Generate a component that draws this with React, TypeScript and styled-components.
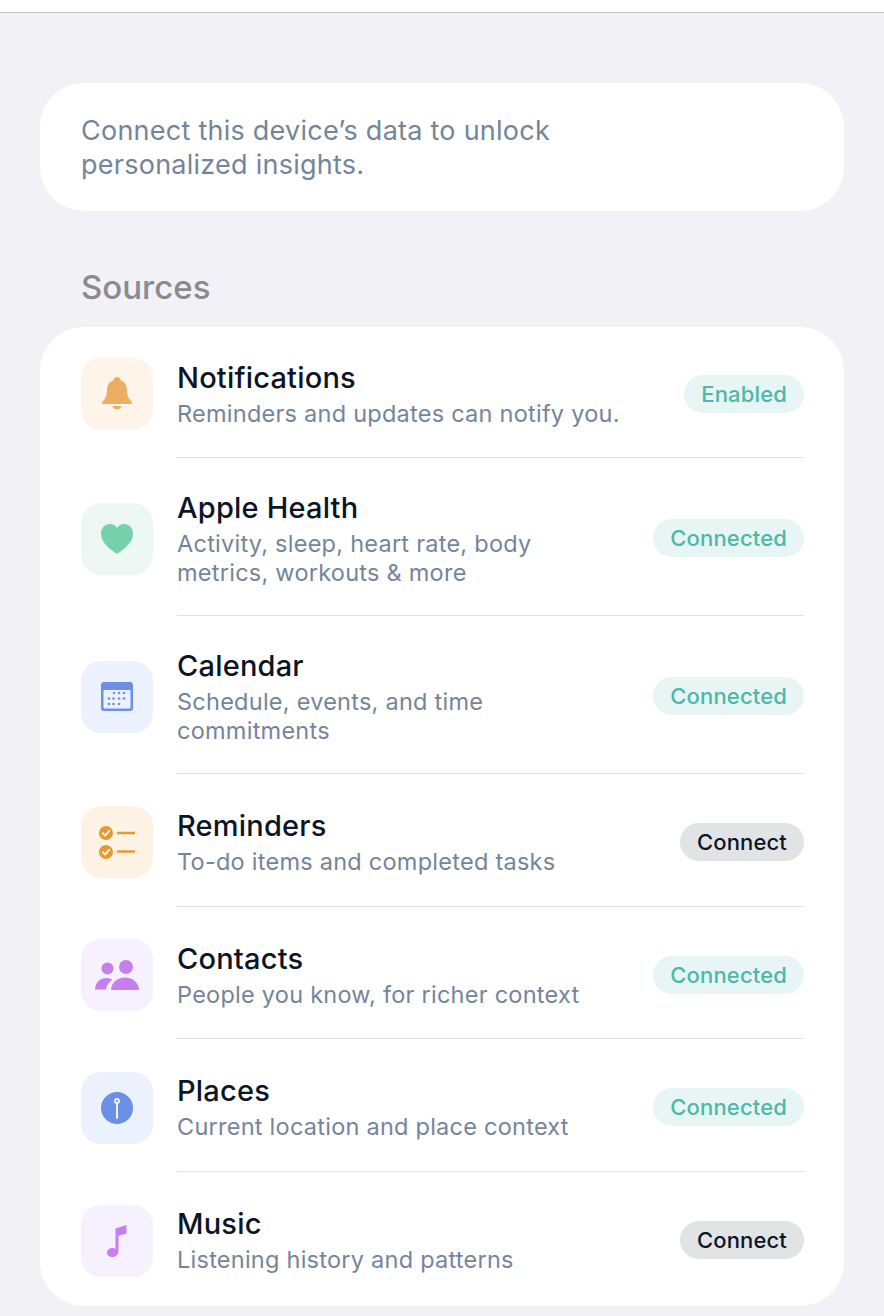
import { ReactNode } from "react";
import styled, { createGlobalStyle } from "styled-components";

const GlobalStyle = createGlobalStyle`
  html, body {
    margin: 0;
    padding: 0;
    background: #f1f1f6;
    font-family: Inter, "Noto Sans", sans-serif;
  }
`;

const Page = styled.div`
  width: 884px;
  height: 1316px;
  overflow: hidden;
  background: #f1f1f6;
`;

const TopBar = styled.div`
  height: 12px;
  background: #ffffff;
  border-bottom: 1px solid #c4c4c8;
`;

const Content = styled.main`
  padding: 70px 40px 0;
`;

const IntroCard = styled.section`
  height: 128px;
  box-sizing: border-box;
  padding: 31px 41px 0;
  background: #fff;
  border-radius: 44px;
  color: #74859b;
  font-size: 27px;
  line-height: 34px;
  letter-spacing: 0.25px;
`;

const SectionTitle = styled.h2`
  margin: 56px 0 0 41px;
  height: 40px;
  font-size: 33px;
  line-height: 40px;
  font-weight: 500;
  color: #8a8a90;
`;

const ListCard = styled.section`
  margin-top: 20px;
  background: #fff;
  border-radius: 44px;
  padding: 0 40px 0 41px;
`;

const Row = styled.div`
  display: flex;
  gap: 24px;
`;

const TileSlot = styled.div`
  display: flex;
  align-items: center;
  padding: 32px 0 28px;

  ${Row}:first-child & {
    padding: 31px 0 27px;
  }
`;

const RowBody = styled.div<{ $last?: boolean }>`
  flex: 1;
  min-width: 0;
  min-height: 72px;
  display: flex;
  align-items: center;
  justify-content: space-between;
  padding: 32px 0 ${(p) => (p.$last ? "29.8px" : "27.88px")};
  border-bottom: ${(p) => (p.$last ? "none" : "1px solid #e2e2e5")};

  ${Row}:first-child & {
    padding: 31px 0 26.88px;
  }
`;

const IconTile = styled.div<{ $bg: string }>`
  width: 72px;
  height: 72px;
  flex-shrink: 0;
  display: flex;
  align-items: center;
  justify-content: center;
  border-radius: 20px;
  background: ${(p) => p.$bg};
`;

const RowText = styled.div`
  width: 450px;
`;

const Title = styled.div`
  font-size: 29px;
  line-height: 36px;
  font-weight: 500;
  letter-spacing: 0.2px;
  color: #0c1526;
  margin-bottom: 3px;
`;

const Subtitle = styled.div`
  font-size: 23.5px;
  line-height: 29px;
  letter-spacing: 0.25px;
  color: #74859b;
`;

const Badge = styled.span<{ $connected: boolean }>`
  height: 38px;
  box-sizing: border-box;
  padding: 0 17px;
  display: flex;
  align-items: center;
  border-radius: 19px;
  font-size: 22px;
  font-weight: 500;
  letter-spacing: 0.15px;
  background: ${(p) => (p.$connected ? "#e7f6f4" : "#e2e3e5")};
  color: ${(p) => (p.$connected ? "#4db8a8" : "#0c1526")};
`;

const BellIcon = () => (
  <svg width="32" height="34" viewBox="0 0 32 34">
    <path
      fill="#ecae62"
      d="M16 0c2 0 3.400 1.500 3.500 3.300C24 4.800 26 8.500 26 13.500c0 5 1.300 8 4.600 11.300.9.900.4 2.200-.9 2.200H2.300c-1.300 0-1.800-1.300-.9-2.200C4.700 21.500 6 18.500 6 13.500 6 8.500 8 4.800 12.500 3.300 12.600 1.500 14 0 16 0Z"
    />
    <path fill="#ecae62" d="M11.500 29h9c-.7 2.400-2.500 3.500-4.500 3.500s-3.800-1.100-4.500-3.500Z" />
  </svg>
);

const HeartIcon = () => (
  <svg width="32" height="30" viewBox="0 0 32 30">
    <path
      fill="#76d0ac"
      d="M16 29.500c-1 0-1.800-.6-3-1.500C6.500 23 0 17.500 0 9.500 0 4 4 0 9 0c3 0 5.500 1.400 7 4 1.500-2.600 4-4 7-4 5 0 9 4 9 9.500 0 8-6.500 13.500-13 18.500-1.200.9-2 1.500-3 1.500Z"
    />
  </svg>
);

const CalendarIcon = () => (
  <svg width="32" height="29" viewBox="0 0 32 29">
    <rect x="0" y="0" width="32" height="29" rx="3" fill="#6c8fe8" />
    <rect x="2.500" y="8" width="27" height="18.500" rx="1" fill="#eef2fd" />
    {[
      [13, 11], [18, 11], [23, 11],
      [8, 16.500], [12.500, 16.500], [18, 16.500], [23, 16.500],
      [8, 22], [12.500, 22], [18, 22],
    ].map(([cx, cy]) => (
      <circle key={`${cx}-${cy}`} cx={cx} cy={cy} r="1.300" fill="#6c8fe8" />
    ))}
  </svg>
);

const RemindersIcon = () => (
  <svg width="36" height="33" viewBox="0 0 36 33">
    <circle cx="7" cy="7" r="7" fill="#e39a35" />
    <circle cx="7" cy="26" r="7" fill="#e39a35" />
    <path d="M3.800 7.200 6.200 9.600 10.400 4.600" fill="none" stroke="#fdf3e5" strokeWidth="1.800" strokeLinecap="round" strokeLinejoin="round" />
    <path d="M3.800 26.200 6.200 28.600 10.400 23.600" fill="none" stroke="#fdf3e5" strokeWidth="1.800" strokeLinecap="round" strokeLinejoin="round" />
    <path d="M18 7h18M18 25.500h18" stroke="#e39a35" strokeWidth="2.400" />
  </svg>
);

const ContactsIcon = () => (
  <svg width="44" height="30" viewBox="0 0 44 30">
    <circle cx="12.500" cy="8.500" r="6" fill="#c77ff0" />
    <circle cx="31" cy="7" r="7" fill="#c77ff0" />
    <path fill="#c77ff0" d="M0 29.500c0-6.500 5-11.500 11-11.500 2.500 0 4.500.6 6.300 1.800-3.300 2.300-5.600 5.700-6.300 9.700Z" />
    <path fill="#c77ff0" d="M16 29.500c.4-7 6.300-12 14-12s13.600 5 14 12c0 .3-.2.500-.5.500h-27c-.3 0-.5-.2-.5-.5Z" />
  </svg>
);

const PlacesIcon = () => (
  <svg width="32" height="32" viewBox="0 0 32 32">
    <circle cx="16" cy="16" r="16" fill="#6c8fe8" />
    <circle cx="16" cy="9" r="3" fill="#eef2fd" />
    <circle cx="16" cy="9" r="1" fill="#6c8fe8" />
    <path d="M16 11v15" stroke="#eef2fd" strokeWidth="2" strokeLinecap="round" />
  </svg>
);

const MusicIcon = () => (
  <svg width="20" height="32" viewBox="0 0 20 32">
    <path
      fill="#c77ff0"
      d="M8.500 3.500 19.500 0v8.500l-8 2.300V26c0 3.400-2.800 6-6 6C2.400 32 0 30.300 0 27.800c0-2.900 2.700-4.800 5.500-4.800 1.100 0 2.200.3 3 .7V3.500Z"
    />
  </svg>
);

type Source = {
  name: string;
  detail: ReactNode;
  status: "Enabled" | "Connected" | "Connect";
  tile: string;
  icon: ReactNode;
};

const sources: Source[] = [
  { name: "Notifications", detail: "Reminders and updates can notify you.", status: "Enabled", tile: "#fef4e9", icon: <BellIcon /> },
  { name: "Apple Health", detail: "Activity, sleep, heart rate, body metrics, workouts & more", status: "Connected", tile: "#edf8f5", icon: <HeartIcon /> },
  { name: "Calendar", detail: "Schedule, events, and time commitments", status: "Connected", tile: "#ecf1fe", icon: <CalendarIcon /> },
  { name: "Reminders", detail: "To-do items and completed tasks", status: "Connect", tile: "#fdf3e5", icon: <RemindersIcon /> },
  { name: "Contacts", detail: "People you know, for richer context", status: "Connected", tile: "#f7f0fe", icon: <ContactsIcon /> },
  { name: "Places", detail: "Current location and place context", status: "Connected", tile: "#ecf1fe", icon: <PlacesIcon /> },
  { name: "Music", detail: "Listening history and patterns", status: "Connect", tile: "#f7f0fe", icon: <MusicIcon /> },
];

export default function App() {
  return (
    <Page>
      <GlobalStyle />
      <TopBar />
      <Content>
        <IntroCard>
          Connect this device’s data to unlock
          <br />
          personalized insights.
        </IntroCard>
        <SectionTitle>Sources</SectionTitle>
        <ListCard>
          {sources.map((s, i) => (
            <Row key={s.name}>
              <TileSlot>
                <IconTile $bg={s.tile}>{s.icon}</IconTile>
              </TileSlot>
              <RowBody $last={i === sources.length - 1}>
                <RowText>
                  <Title>{s.name}</Title>
                  <Subtitle>{s.detail}</Subtitle>
                </RowText>
                <Badge $connected={s.status !== "Connect"}>{s.status}</Badge>
              </RowBody>
            </Row>
          ))}
        </ListCard>
      </Content>
    </Page>
  );
}
